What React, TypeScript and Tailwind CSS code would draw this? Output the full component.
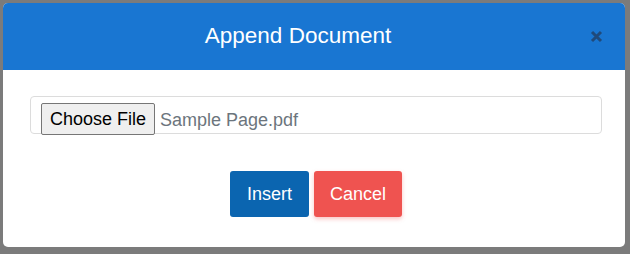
export default function App() {
  return (
    <div
      className="h-[254px] w-[630px] bg-[#7b7b7b] pl-[3px] pt-[3px]"
      style={{ fontFamily: '"Liberation Sans", Arial, sans-serif' }}
    >
      <div className="h-[244px] w-[622px] overflow-hidden rounded-[5px] bg-white">
        {/* Header */}
        <div className="relative flex h-[67px] items-center justify-center bg-[#1976d2] pr-[32px]">
          <h1 className="text-[22.5px] leading-none text-white">Append Document</h1>
          <button className="absolute right-[22px] top-[27px] text-[#1f4a7c]" aria-label="Close">
            <svg width="13" height="13" viewBox="0 0 13 13">
              <path d="M2 2L11 11M11 2L2 11" stroke="currentColor" strokeWidth="3" />
            </svg>
          </button>
        </div>

        {/* Body */}
        <div className="pl-[27px] pr-[23px] pt-[26px]">
          <div className="flex h-[38px] items-start gap-[5px] rounded-[4px] border border-[#dcdcdc] pl-[10px] pt-[6px]">
            <button className="h-[32px] w-[114px] rounded-[2px] border border-[#767676] bg-[#efefef] text-[18px] text-black">
              Choose File
            </button>
            <span className="pt-[4px] text-[18px] text-[#6c757d]">Sample Page.pdf</span>
          </div>

          <div className="mt-[37px] flex justify-center gap-[5px]">
            <button className="h-[46px] w-[79px] rounded-[3px] bg-[#0b65b0] text-[18px] text-white">
              Insert
            </button>
            <button className="h-[46px] w-[88px] rounded-[3px] bg-[#ef5350] text-[18px] text-white shadow-[0_2px_4px_rgba(239,83,80,0.35)]">
              Cancel
            </button>
          </div>
        </div>
      </div>
    </div>
  )
}
